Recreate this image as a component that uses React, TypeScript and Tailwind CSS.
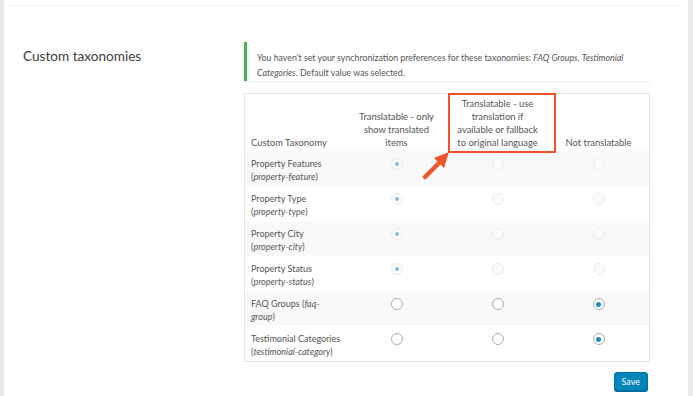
import React from "react";

type Row = {
  name: string;
  slug: string;
  choice: number;
  locked: boolean;
  wrapSlug?: boolean;
};

const ROWS: Row[] = [
  { name: "Property Features", slug: "property-feature", choice: 0, locked: true },
  { name: "Property Type", slug: "property-type", choice: 0, locked: true },
  { name: "Property City", slug: "property-city", choice: 0, locked: true },
  { name: "Property Status", slug: "property-status", choice: 0, locked: true },
  { name: "FAQ Groups", slug: "faq-group", choice: 2, locked: false, wrapSlug: true },
  { name: "Testimonial Categories", slug: "testimonial-category", choice: 2, locked: false },
];

function Radio({ checked, locked }: { checked: boolean; locked: boolean }) {
  if (locked) {
    return (
      <span className="flex h-[12px] w-[12px] items-center justify-center rounded-full border border-[#ebebeb] bg-[#fbfbfb]">
        {checked && <span className="h-[4px] w-[4px] rounded-full bg-[#7fbde4]" />}
      </span>
    );
  }
  return (
    <span className="flex h-[12px] w-[12px] items-center justify-center rounded-full border border-[#a9aeb3] bg-white">
      {checked && <span className="h-[5px] w-[5px] rounded-full bg-[#1e8cbe]" />}
    </span>
  );
}

export default function App() {
  return (
    <div
      className="flex h-[396px] w-[693px] overflow-hidden bg-white text-[#555]"
      style={{ fontFamily: "Lato, 'Open Sans', sans-serif" }}
    >
      <div className="w-[4px] shrink-0 bg-[#ebebeb]" />
      <div className="flex-1">
        <div className="mx-[6px] mt-[5px] h-px bg-[#eeeeee]" />

        <div className="mt-[36px] flex">
          {/* Section label */}
          <div className="w-[240px] shrink-0 pl-[19px] pt-[4px]">
            <h2 className="text-[13.6px] leading-[20px] text-[#3c3c3c]">Custom taxonomies</h2>
          </div>

          <div className="w-[406px] shrink-0">
            {/* Notice */}
            <div className="h-[39px] border-l-[3px] border-[#46b450] bg-white pl-[10px] pr-[10px] pt-[8px] text-[8.8px] leading-[15px] text-[#555] shadow-[0_1px_2px_rgba(0,0,0,0.08)]">
              You haven't set your synchronization preferences for these taxonomies:{" "}
              <em>FAQ Groups</em>, <em>Testimonial Categories</em>. Default value was selected.
            </div>

            {/* Table */}
            <div className="relative mt-[12px] border border-[#e5e5e5] bg-white text-[9px] leading-[13px]">
              <div className="grid h-[57px] grid-cols-4 items-end pb-[2px] text-[9.4px] text-[#555]">
                <div className="pl-[6px]">Custom Taxonomy</div>
                <div className="px-[10px] text-center">Translatable - only show translated items</div>
                <div className="px-[8px] text-center">
                  Translatable - use translation if available or fallback to original language
                </div>
                <div className="text-center">Not translatable</div>
              </div>

              {ROWS.map((row, i) => (
                <div
                  key={row.slug}
                  className={`grid h-[35px] grid-cols-4 pt-[6px] ${i % 2 === 0 ? "bg-[#f9f9f9]" : "bg-white"}`}
                >
                  <div className="whitespace-nowrap pl-[6px] text-[#555]">
                    {row.wrapSlug ? (
                      <>
                        {row.name} (<em>faq-</em>
                        <br />
                        <em>group</em>)
                      </>
                    ) : (
                      <>
                        {row.name}
                        <br />(<em>{row.slug}</em>)
                      </>
                    )}
                  </div>
                  {[0, 1, 2].map((c) => (
                    <div key={c} className="flex justify-center pt-[1px]">
                      <Radio checked={row.choice === c} locked={row.locked} />
                    </div>
                  ))}
                </div>
              ))}

              {/* Annotation */}
              <div className="pointer-events-none absolute left-[203px] top-[-1px] h-[60px] w-[108px] border-[2px] border-[#f2502a]" />
              <svg
                className="pointer-events-none absolute left-[175px] top-[56px]"
                width="32"
                height="32"
                viewBox="0 0 32 32"
              >
                <line x1="5" y1="27" x2="22" y2="10" stroke="#f2542b" strokeWidth="4.5" strokeLinecap="round" />
                <polygon points="29,2 14,8 24,18" fill="#f2542b" />
              </svg>
            </div>

            <div className="mt-[10px] flex justify-end pr-[2px]">
              <button className="h-[19px] rounded-[3px] border border-[#0073aa] bg-[#0085ba] px-[7px] text-[9px] leading-[17px] text-white shadow-[0_1px_0_#006799]">
                Save
              </button>
            </div>
          </div>
        </div>
      </div>
      <div className="w-[5px] shrink-0 bg-[#ebebeb]" />
    </div>
  );
}
